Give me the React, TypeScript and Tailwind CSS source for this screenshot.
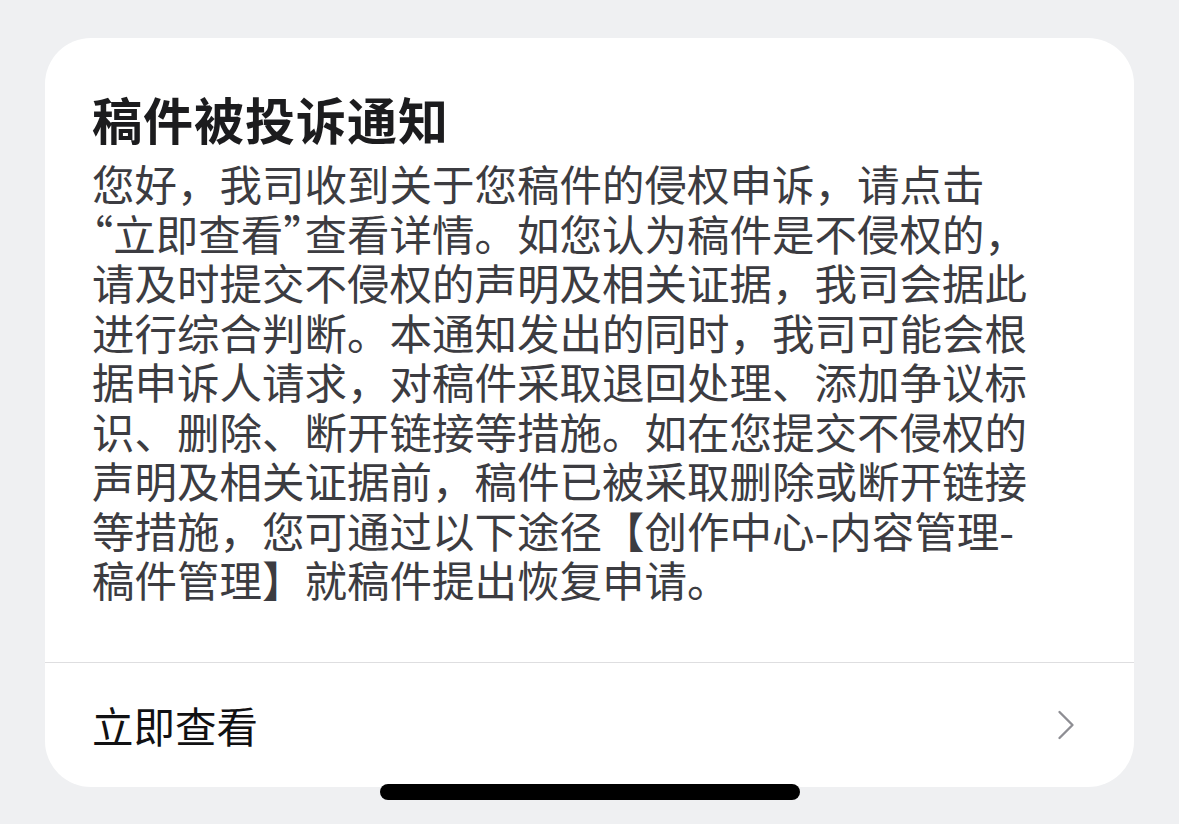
import { ChevronRight } from 'lucide-react'

// Quote marks render half-width in the reference, the rest is full-width
const Q = ({ children }: { children: string }) => (
  <span className="[font-feature-settings:'halt']">{children}</span>
)

const BODY_LINES: React.ReactNode[] = [
  '您好，我司收到关于您稿件的侵权申诉，请点击',
  <>
    <Q>“</Q>立即查看<Q>”</Q>查看详情。如您认为稿件是不侵权的，
  </>,
  '请及时提交不侵权的声明及相关证据，我司会据此',
  '进行综合判断。本通知发出的同时，我司可能会根',
  '据申诉人请求，对稿件采取退回处理、添加争议标',
  '识、删除、断开链接等措施。如在您提交不侵权的',
  '声明及相关证据前，稿件已被采取删除或断开链接',
  '等措施，您可通过以下途径【创作中心-内容管理-',
  '稿件管理】就稿件提出恢复申请。',
]

export default function App() {
  return (
    <div
      className="relative w-[1179px] h-[824px] overflow-hidden bg-[#eff0f2] pt-[38px] pl-[45px]"
      style={{ fontFamily: '"Noto Sans CJK SC", "Noto Sans", sans-serif' }}
    >
      {/* Notice card */}
      <div className="w-[1089px] h-[749px] rounded-[46px] bg-white flex flex-col">
        <div className="h-[624px] px-[47px] pt-[50px]">
          <h1 className="text-[50px] leading-[60px] font-bold text-[#1c1c1e] tracking-[1px]">
            稿件被投诉通知
          </h1>
          <p className="mt-[10px] text-[42.5px] leading-[49.5px] text-[#3c3c41]">
            {BODY_LINES.map((line, i) => (
              <span key={i} className="block whitespace-nowrap">
                {line}
              </span>
            ))}
          </p>
        </div>
        <div className="h-px bg-[#dedee0]" />
        <div className="flex-1 flex items-center justify-between pl-[47px] pr-[42px]">
          <span className="text-[41.5px] text-[#111113]">立即查看</span>
          <ChevronRight size={52} strokeWidth={1.1} className="text-[#8e8e93]" />
        </div>
      </div>

      {/* Home indicator */}
      <div className="absolute left-[380px] top-[784px] w-[420px] h-[16px] rounded-full bg-black" />
    </div>
  )
}
